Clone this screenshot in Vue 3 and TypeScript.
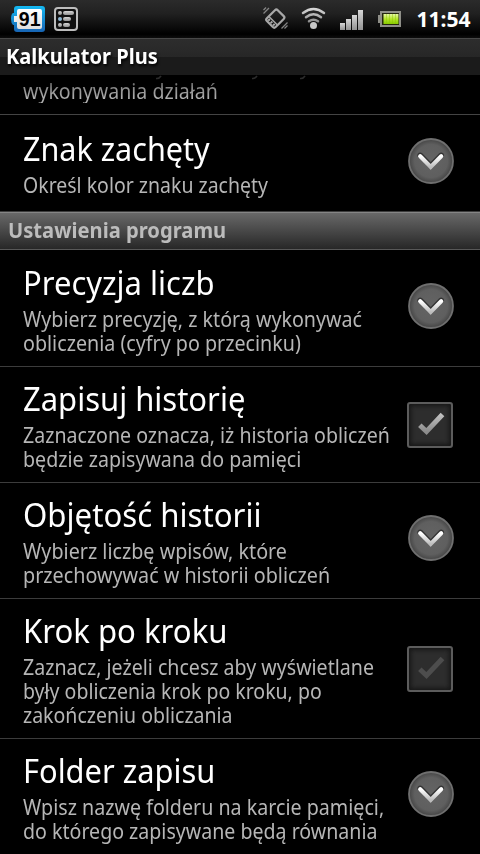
<script setup lang="ts">
import type { Directive } from 'vue'

interface Line {
  text: string
  width: number
}
interface Row {
  title: Line
  lines: Line[]
  control: 'expand' | 'checked' | 'unchecked'
}

// Condenses a line of text horizontally to the given width.
const vFit: Directive<HTMLElement, number> = {
  mounted(el, binding) {
    el.style.transform = `scaleX(${binding.value / el.offsetWidth})`
  },
}

const prompt: Row = {
  title: { text: 'Znak zachęty', width: 187 },
  lines: [{ text: 'Określ kolor znaku zachęty', width: 245 }],
  control: 'expand',
}

const settings: Row[] = [
  {
    title: { text: 'Precyzja liczb', width: 191.5 },
    lines: [
      { text: 'Wybierz precyzję, z którą wykonywać', width: 339 },
      { text: 'obliczenia (cyfry po przecinku)', width: 277.5 },
    ],
    control: 'expand',
  },
  {
    title: { text: 'Zapisuj historię', width: 222.5 },
    lines: [
      { text: 'Zaznaczone oznacza, iż historia obliczeń', width: 366.5 },
      { text: 'będzie zapisywana do pamięci', width: 278.5 },
    ],
    control: 'checked',
  },
  {
    title: { text: 'Objętość historii', width: 239 },
    lines: [
      { text: 'Wybierz liczbę wpisów, które', width: 264 },
      { text: 'przechowywać w historii obliczeń', width: 307.5 },
    ],
    control: 'expand',
  },
  {
    title: { text: 'Krok po kroku', width: 204.5 },
    lines: [
      { text: 'Zaznacz, jeżeli chcesz aby wyświetlane', width: 351 },
      { text: 'były obliczenia krok po kroku, po', width: 299 },
      { text: 'zakończeniu obliczania', width: 210 },
    ],
    control: 'unchecked',
  },
  {
    title: { text: 'Folder zapisu', width: 192.5 },
    lines: [
      { text: 'Wpisz nazwę folderu na karcie pamięci,', width: 361.5 },
      { text: 'do którego zapisywane będą równania', width: 354.5 },
    ],
    control: 'expand',
  },
]

const sections: { heading?: Line; rows: Row[] }[] = [
  { rows: [prompt] },
  { heading: { text: 'Ustawienia programu', width: 218 }, rows: settings },
]
</script>

<template>
  <div class="screen">
    <svg class="defs" width="0" height="0" aria-hidden="true">
      <defs>
        <linearGradient id="silver" x1="0" y1="0" x2="0" y2="1">
          <stop offset="0" stop-color="#d6d6d6" />
          <stop offset="1" stop-color="#929292" />
        </linearGradient>
        <linearGradient id="arrow" x1="0" y1="0" x2="0" y2="1">
          <stop offset="0" stop-color="#fff" />
          <stop offset="1" stop-color="#bdbdbd" />
        </linearGradient>
        <linearGradient id="tick" x1="0" y1="0" x2="0" y2="1">
          <stop offset="0" stop-color="#c0c0c0" />
          <stop offset="1" stop-color="#8c8c8c" />
        </linearGradient>
        <linearGradient id="blue" x1="0" y1="0" x2="0" y2="1">
          <stop offset="0" stop-color="#14b9f2" />
          <stop offset="1" stop-color="#1764b4" />
        </linearGradient>
        <linearGradient id="paper" x1="0" y1="0" x2="0" y2="1">
          <stop offset="0" stop-color="#fff" />
          <stop offset="1" stop-color="#dedede" />
        </linearGradient>
        <linearGradient id="charge" x1="0" y1="0" x2="0" y2="1">
          <stop offset="0" stop-color="#e6f7a8" />
          <stop offset="0.5" stop-color="#b4e62a" />
          <stop offset="1" stop-color="#88cc00" />
        </linearGradient>
        <radialGradient id="disc" cx="0.5" cy="0.5" r="0.5">
          <stop offset="0" stop-color="#646464" />
          <stop offset="0.75" stop-color="#5f5f5f" />
          <stop offset="1" stop-color="#454545" />
        </radialGradient>
      </defs>
    </svg>

    <header class="status">
      <svg class="left" width="84" height="38" viewBox="0 0 84 38">
        <path d="M17 6H42Q45 6 45 9V29Q45 32 42 32H17Q14 32 14 29V25H13Q11 23 11 19Q11 14 13 13H14V9Q14 6 17 6Z" fill="url(#blue)" />
        <path d="M19 9H40Q42 9 42 11V27Q42 29 40 29H19Q17 29 17 27V22H14V16H17V11Q17 9 19 9Z" fill="url(#paper)" />
        <text x="29.700" y="26" class="badge" text-anchor="middle">91</text>
        <rect x="55" y="8" width="22" height="22" rx="3" fill="#111" stroke="#bdbdbd" stroke-width="2" />
        <g fill="url(#silver)">
          <circle cx="60" cy="13" r="2" />
          <circle cx="60" cy="19" r="2" fill="#8fb9d6" />
          <circle cx="60" cy="25" r="2" />
          <rect x="63" y="11" width="11" height="4" rx="2" />
          <rect x="63" y="17" width="8" height="4" rx="2" />
          <rect x="63" y="23" width="7" height="4" rx="2" />
        </g>
      </svg>
      <svg width="146" height="38" viewBox="260 0 146 38">
        <g fill="none" stroke="#a8a8a8">
          <g transform="translate(275.300 18.600) rotate(45)">
            <rect x="-6.200" y="-7.700" width="12.400" height="15.400" rx="2" stroke-width="2.200" />
            <path d="M-6 3H6" stroke-width="1.400" />
            <path d="M-4.500 5.300H5" stroke-width="2.400" stroke-dasharray="2 1.400" />
          </g>
          <path d="M263.500 13.500L269 8M263.500 10L266 7.500M281.500 28.500L287.500 22.500M284.500 28.500L287.500 25.500" stroke="#858585" stroke-width="1.300" />
          <path d="M303 13Q313.500 5 324 13M306 17.200Q313.500 11.300 321 17.200M309 21.200Q313.500 18.200 318 21.200" stroke="url(#silver)" stroke-width="2.500" stroke-linecap="round" />
        </g>
        <circle cx="313.500" cy="25.500" r="3.500" fill="#c8c8c8" />
        <g fill="url(#silver)">
          <rect x="340" y="23" width="5" height="7" />
          <rect x="346" y="19" width="5" height="11" />
          <rect x="352" y="15" width="5" height="15" />
          <rect x="358" y="10" width="5" height="20" />
        </g>
        <path d="M380 11H401V27H380V23H378V15H380Z" fill="#8f8f88" />
        <rect x="382" y="13" width="17" height="12" fill="#26290f" />
        <rect x="383.500" y="14" width="15" height="10" fill="url(#charge)" />
        <path d="M386.500 14V24M389.500 14V24M392.500 14V24M395.500 14V24" stroke="#8ec600" stroke-width="1" opacity="0.45" />
      </svg>
      <span v-fit="54" class="clock">11:54</span>
    </header>

    <div class="titlebar"><span v-fit="152" class="fit">Kalkulator Plus</span></div>

    <main class="list">
      <div class="cut">
        <svg class="tails" width="180" height="5" viewBox="0 0 180 5">
          <path d="M2 3.500Q5 4 7 1M98 3.500Q101 4 103 1M146 3.500Q149 4 151 1" fill="none" stroke="#2c2c2c" stroke-width="1.600" />
        </svg>
        <span v-fit="195" class="fit faded">wykonywania działań</span>
      </div>

      <section v-for="(section, i) in sections" :key="i">
        <h2 v-if="section.heading" class="heading">
          <span v-fit="section.heading.width" class="fit">{{ section.heading.text }}</span>
        </h2>
        <div
          v-for="row in section.rows"
          :key="row.title.text"
          class="row"
          :class="{ short: row.lines.length === 1 }"
        >
          <div class="copy">
            <div class="name"><span v-fit="row.title.width" class="fit">{{ row.title.text }}</span></div>
            <div v-for="line in row.lines" :key="line.text" class="line">
              <span v-fit="line.width" class="fit">{{ line.text }}</span>
            </div>
          </div>
          <svg v-if="row.control === 'expand'" class="control" width="48" height="48" viewBox="0 0 48 48">
            <circle cx="24" cy="24" r="22" fill="url(#disc)" stroke="#6f6f6f" stroke-width="1.800" />
            <path d="M13.200 18.300L23.700 29L34.200 18.300" fill="none" stroke="#343434" stroke-width="5.500" stroke-linecap="round" />
            <path d="M13.200 19.300L23.700 30L34.200 19.300" fill="none" stroke="url(#arrow)" stroke-width="4.200" stroke-linecap="round" />
          </svg>
          <span v-else class="control box">
            <svg width="48" height="48" viewBox="0 0 48 48">
              <path d="M13.800 24.200L20.500 30.500L36.500 13.500" fill="none" :stroke="row.control === 'checked' ? 'url(#tick)' : '#4d4d4d'" stroke-width="5" />
            </svg>
          </span>
        </div>
      </section>
    </main>
  </div>
</template>

<style>
body {
  background: #000;
}
</style>

<style scoped>
.screen {
  width: 480px;
  height: 854px;
  overflow: hidden;
  display: flex;
  flex-direction: column;
  background: #000;
  color: #fff;
  font-family: "Noto Sans", sans-serif;
}
.defs {
  position: absolute;
}
.fit {
  display: inline-block;
  white-space: nowrap;
  transform-origin: 0 50%;
}
.status {
  flex: none;
  height: 38px;
  display: flex;
  align-items: center;
  background: linear-gradient(#2b2b2b, #212121 35%, #0b0b0b 72%, #000 90%, #0d0d0d);
}
.left {
  margin-right: 176px;
}
.badge {
  font: 700 19.5px "Liberation Sans", sans-serif;
  fill: #000;
}
.clock {
  margin-left: 10.5px;
  font-size: 21px;
  font-weight: 700;
  line-height: 38px;
  transform-origin: 0 50%;
}
.titlebar {
  flex: none;
  height: 37px;
  box-sizing: border-box;
  padding-left: 6px;
  border-top: 1px solid #484848;
  background: linear-gradient(#2d2d2d, #272727 50%, #1b1b1b 50%, #1b1b1b);
  font-size: 21px;
  font-weight: 700;
  line-height: 35px;
  text-shadow: 1px 2px 3px #000;
}
.list {
  flex: none;
}
.cut {
  height: 40px;
  box-sizing: border-box;
  display: flex;
  flex-direction: column;
  padding-left: 23px;
  border-bottom: 1px solid #444;
  font-size: 21px;
  line-height: 24px;
}
.tails {
  flex: none;
  margin-left: 131px;
}
.faded {
  align-self: flex-start;
  margin-top: -1px;
  background: linear-gradient(#606060 10%, #8c8c8c 40%, #b0b0b0 80%);
  -webkit-background-clip: text;
  background-clip: text;
  color: transparent;
}
.row {
  display: flex;
  align-items: center;
  justify-content: space-between;
  min-height: 97px;
  box-sizing: border-box;
  padding: 12px 25px 11px 23px;
  border-bottom: 1px solid #3c3c3c;
}
.short .copy {
  margin-bottom: 2px;
}
.name {
  height: 44px;
  font-size: 33px;
  line-height: 39px;
}
.line {
  height: 24px;
  font-size: 21px;
  line-height: 24px;
  color: #b6b6b6;
}
.control {
  flex: none;
  width: 48px;
  height: 48px;
  margin: 0 0 6px -60px;
}
.box {
  box-sizing: border-box;
  width: 46px;
  height: 46px;
  margin: 0 2px 0 -60px;
  display: flex;
  align-items: center;
  justify-content: center;
  border: 2px solid #5c5c5c;
  border-radius: 3px;
  background: #2d2d2d;
  box-shadow: inset 0 0 4px 2px #171717;
}
.box svg {
  flex: none;
}
.heading {
  height: 39px;
  margin: 0;
  box-sizing: border-box;
  padding-left: 8px;
  border-top: 1px solid #858585;
  border-bottom: 1px solid #000;
  background: linear-gradient(#686868, #272727) 0 0 / 100% 36px no-repeat, #585858;
  font-size: 21px;
  font-weight: 700;
  line-height: 35px;
  color: #bcbcbc;
}
</style>
